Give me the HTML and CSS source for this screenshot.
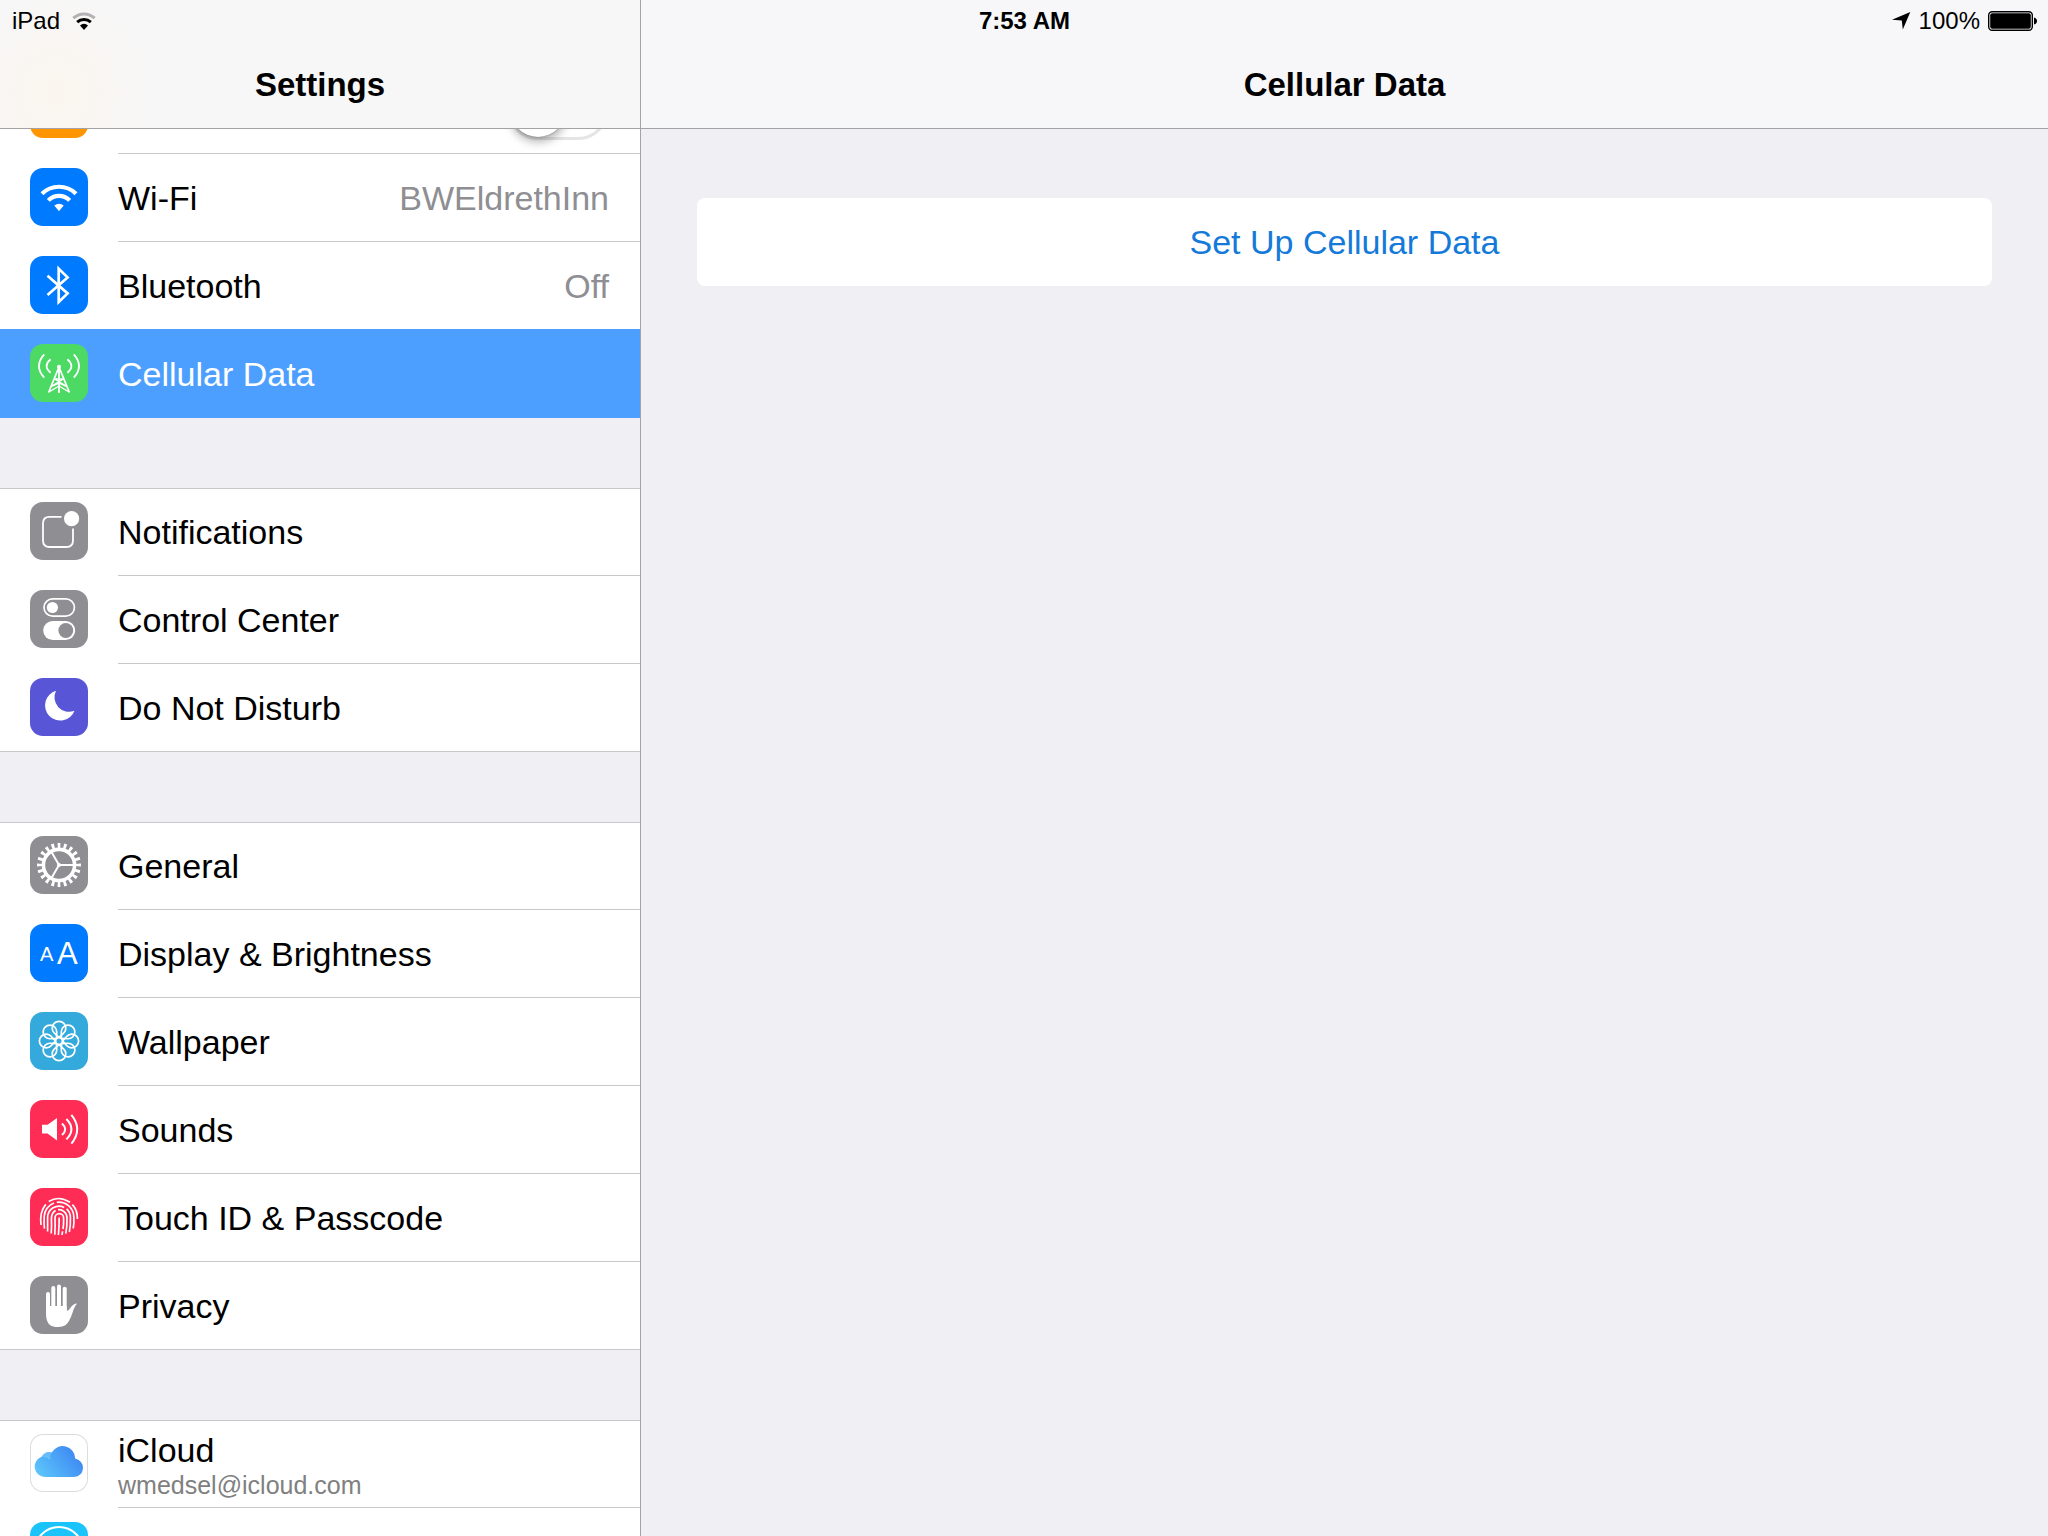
FILE: index.html
```
<!DOCTYPE html>
<html lang="en">
<head>
    <meta charset="UTF-8">
    <title>Settings</title>
    <link rel="stylesheet" href="styles.css">
</head>
<body>
<div class="status">
    <div class="status-left">
        <span>iPad</span>
        <svg class="status-wifi" viewBox="0 0 24 18" width="24" height="18">
            <path d="M1.3 6.2A15.5 15.5 0 0 1 22.7 6.2" fill="none" stroke="#b2b2b4" stroke-width="3"/>
            <path d="M5.2 10.2A10 10 0 0 1 18.8 10.2" fill="none" stroke="#000" stroke-width="3"/>
            <path d="M12 18L8 13.4A6 6 0 0 1 16 13.4Z"/>
        </svg>
    </div>
    <div class="time">7:53 AM</div>
    <div class="status-right">
        <svg viewBox="0 0 19 18" width="19" height="18"><path d="M18.3 0L10.8 17.5L9.8 8.4L0 7.7Z"/></svg>
        <span>100%</span>
        <svg class="battery" viewBox="0 0 49 20" width="49" height="20">
            <rect x="0.7" y="0.7" width="43.6" height="18.6" rx="3.5" fill="#fff" stroke="#000" stroke-width="1.4"/>
            <rect x="2.2" y="2.2" width="40.6" height="15.6" rx="2"/>
            <path d="M46 6.5Q49 7.5 49 10T46 13.5Z"/>
        </svg>
    </div>
</div>
<div class="split">
    <aside class="sidebar">
        <header class="bar bar-list"><h1>Settings</h1></header>
        <nav class="list">
            <ul class="group">
                <li class="row">
                    <span class="icon orange">
                        <svg viewBox="0 0 58 58"><path fill="#fff" d="M48 29q0-3-5-3H34L24 11H20l5 15H16l-4-5H9l3 8-3 8h3l4-5h9L20 47h4L34 32h9q5 0 5-3z"/></svg>
                    </span>
                    <label class="name" for="airplane">Airplane Mode</label>
                    <input class="switch" type="checkbox" id="airplane">
                </li>
                <li>
                    <a class="row" href="#wifi">
                        <span class="icon blue">
                            <svg viewBox="0 0 58 58">
                                <g fill="none" stroke="#fff" stroke-width="4.2">
                                    <path d="M12 25.7A24.3 24.3 0 0 1 46 25.7"/>
                                    <path d="M18.3 32.4A15 15 0 0 1 39.7 32.4"/>
                                </g>
                                <path fill="#fff" d="M29 43.3L24.3 37.6A7.5 7.5 0 0 1 33.7 37.6Z"/>
                            </svg>
                        </span>
                        <span class="name">Wi-Fi</span>
                        <span class="value">BWEldrethInn</span>
                    </a>
                </li>
                <li>
                    <a class="row" href="#bluetooth">
                        <span class="icon blue">
                            <svg viewBox="0 0 58 58"><path fill="none" stroke="#fff" stroke-width="2.7" d="M17.5 19.8L37.6 37.4L28.7 46V12.8L37.6 21.4L17.5 39"/></svg>
                        </span>
                        <span class="name">Bluetooth</span>
                        <span class="value">Off</span>
                    </a>
                </li>
                <li>
                    <a class="row selected" href="#cellular" aria-current="page">
                        <span class="icon green">
                            <svg viewBox="0 0 58 58">
                                <g fill="none" stroke="#fff" stroke-width="1.8">
                                    <path d="M29 22V49M28.6 24L18.6 48.5M29.4 24L39.4 48.5"/>
                                    <path stroke-width="1.4" d="M24.6 35H33.4M24.6 35L37 42.5M33.4 35L21 42.5M21 42.5L29 39L37 42.5M19 48L29 42L39 48"/>
                                    <path d="M20.6 15.3Q12.6 22 20.6 28.8M37.4 15.3Q45.4 22 37.4 28.8"/>
                                    <path d="M14.2 10.3Q3.8 22 14.2 33.7M43.8 10.3Q54.2 22 43.8 33.7"/>
                                </g>
                                <circle cx="29" cy="22.8" r="2" fill="#fff"/>
                            </svg>
                        </span>
                        <span class="name">Cellular Data</span>
                    </a>
                </li>
            </ul>
            <ul class="group">
                <li>
                    <a class="row" href="#notifications">
                        <span class="icon gray">
                            <svg viewBox="0 0 58 58">
                                <path fill="none" stroke="#fff" stroke-width="1.8" d="M31.5 14.8H19.5Q13 14.8 13 21.3V38.3Q13 45 19.5 45H36.5Q43 45 43 38.3V26.5"/>
                                <circle cx="41.6" cy="16.7" r="7.6" fill="#fff"/>
                            </svg>
                        </span>
                        <span class="name">Notifications</span>
                    </a>
                </li>
                <li>
                    <a class="row" href="#control-center">
                        <span class="icon gray">
                            <svg viewBox="0 0 58 58">
                                <rect x="14" y="8.8" width="30.4" height="17.4" rx="8.7" fill="none" stroke="#fff" stroke-width="1.7"/>
                                <circle cx="22.4" cy="17.5" r="5.6" fill="#fff"/>
                                <rect x="13.2" y="31" width="32" height="19" rx="9.5" fill="#fff"/>
                                <circle cx="35.8" cy="40.5" r="7.4" fill="#8e8e93"/>
                            </svg>
                        </span>
                        <span class="name">Control Center</span>
                    </a>
                </li>
                <li>
                    <a class="row" href="#dnd">
                        <span class="icon purple">
                            <svg viewBox="0 0 58 58"><path fill="#fff" d="M26 12.8A15.2 15.2 0 1 0 44.5 32.7A14.5 14.5 0 0 1 26 12.8Z"/></svg>
                        </span>
                        <span class="name">Do Not Disturb</span>
                    </a>
                </li>
            </ul>
            <ul class="group">
                <li>
                    <a class="row" href="#general">
                        <span class="icon gray">
                            <svg viewBox="0 0 58 58">
                                <g fill="none" stroke="#fff">
                                    <circle cx="29" cy="29" r="15.6" stroke-width="3.6"/>
                                    <!-- teeth -->
                                    <circle cx="29" cy="29" r="19.2" stroke-width="5.6" pathLength="40" stroke-dasharray="0.9 1.1" stroke-dashoffset="0.45"/>
                                    <path stroke-width="2" d="M29 29H44M29 29L21.5 16M29 29L21.5 42"/>
                                </g>
                                <circle cx="29" cy="29" r="2" fill="#fff"/>
                            </svg>
                        </span>
                        <span class="name">General</span>
                    </a>
                </li>
                <li>
                    <a class="row" href="#display">
                        <span class="icon blue">
                            <svg viewBox="0 0 58 58" aria-hidden="true">
                                <text class="glyph-small" x="10" y="37">A</text>
                                <text class="glyph-big" x="27" y="40">A</text>
                            </svg>
                        </span>
                        <span class="name">Display &amp; Brightness</span>
                    </a>
                </li>
                <li>
                    <a class="row" href="#wallpaper">
                        <span class="icon sky">
                            <svg viewBox="0 0 58 58">
                                <defs><path id="petal" d="M29 25.4L24.4 21.2A6.8 6.8 0 1 1 33.6 21.2Z"/></defs>
                                <g fill="none" stroke="#fff" stroke-width="1.7">
                                    <use href="#petal"/>
                                    <use href="#petal" transform="rotate(45 29 29)"/>
                                    <use href="#petal" transform="rotate(90 29 29)"/>
                                    <use href="#petal" transform="rotate(135 29 29)"/>
                                    <use href="#petal" transform="rotate(180 29 29)"/>
                                    <use href="#petal" transform="rotate(225 29 29)"/>
                                    <use href="#petal" transform="rotate(270 29 29)"/>
                                    <use href="#petal" transform="rotate(315 29 29)"/>
                                    <circle cx="29" cy="29" r="3.4"/>
                                </g>
                            </svg>
                        </span>
                        <span class="name">Wallpaper</span>
                    </a>
                </li>
                <li>
                    <a class="row" href="#sounds">
                        <span class="icon pink">
                            <svg viewBox="0 0 58 58">
                                <path fill="#fff" d="M12 24.8H17.6L27 18V40.4L17.6 33.6H12Z"/>
                                <g fill="none" stroke="#fff" stroke-width="2">
                                    <path d="M32 23.4Q38.4 29.2 32 35"/>
                                    <path d="M36.4 19Q46.4 29.2 36.4 39.4"/>
                                    <path d="M41.4 14.8Q53 29.2 41.4 43.6"/>
                                </g>
                            </svg>
                        </span>
                        <span class="name">Sounds</span>
                    </a>
                </li>
                <li>
                    <a class="row" href="#touch-id">
                        <span class="icon pink">
                            <svg viewBox="0 0 58 58">
                                <g fill="none" stroke="#fff" stroke-width="1.7">
                                    <path d="M18.8 13.4Q29 7.2 40 14.2"/>
                                    <path d="M15.8 16.4Q9.4 24 11 37"/>
                                    <path d="M42.4 16.6Q47.6 22 47.4 31"/>
                                    <path d="M14.4 40.6Q13.8 35 14.2 28.5A14.7 14.7 0 0 1 24 15"/>
                                    <path d="M26.8 14.3A14.8 14.8 0 0 1 43.8 28.5Q44.4 35 43.2 40.5"/>
                                    <path d="M17.6 43.6V29.5A11.4 11.4 0 0 1 34.2 19.4"/>
                                    <path d="M36.6 20.8A11.3 11.3 0 0 1 40.4 29.4Q40.6 38 39.4 43.8"/>
                                    <path d="M21.2 45.5Q21.8 38 21.4 31Q21.4 25 25.6 22.6"/>
                                    <path d="M28 21.6A8.2 8.2 0 0 1 37 30Q37.2 38 35.8 45.6"/>
                                    <path d="M24.8 46.8Q25.4 38 25 30A4.3 4.3 0 0 1 33.6 30Q33.8 36 33 41"/>
                                    <path d="M32.6 43.4L32 46.8M28.4 47Q29.2 38 29.2 29.4"/>
                                </g>
                            </svg>
                        </span>
                        <span class="name">Touch ID &amp; Passcode</span>
                    </a>
                </li>
                <li>
                    <a class="row" href="#privacy">
                        <span class="icon gray">
                            <svg viewBox="0 0 58 58">
                                <path fill="none" stroke="#fff" stroke-width="4" stroke-linecap="round" d="M18 18V34M23.3 12V34M29 10.4V34M34.7 12.8V34"/>
                                <path fill="#fff" d="M16 30H36.7V35Q38.4 34.8 40 32.4Q43 27.6 47.3 27.6Q44.4 30.4 42.6 36.6Q39.4 46.4 35.4 49.2Q32.6 51 28.4 51Q22.4 51 19.4 48.4Q16 45.2 16 38Z"/>
                            </svg>
                        </span>
                        <span class="name">Privacy</span>
                    </a>
                </li>
            </ul>
            <ul class="group">
                <li>
                    <a class="row" href="#icloud">
                        <span class="icon white">
                            <svg viewBox="0 0 58 58">
                                <defs>
                                    <linearGradient id="cloud" x1="0" y1="0.8" x2="1" y2="0.3">
                                        <stop offset="0" stop-color="#5cc6fa"/>
                                        <stop offset="1" stop-color="#3c84f2"/>
                                    </linearGradient>
                                </defs>
                                <path fill="url(#cloud)" d="M15 43A10.4 10.4 0 0 1 11.6 22.8A7.8 7.8 0 0 1 21.6 18.6A12.6 12.6 0 0 1 45.2 24.4Q53 26.8 53 34Q52.4 42.4 44 43Z"/>
                                <path fill="#7fd2fb" opacity="0.5" d="M11.6 22.8A7.8 7.8 0 0 1 21.6 18.6Q20 22 20.2 26Q16 22.4 11.6 22.8Z"/>
                            </svg>
                        </span>
                        <span class="name account">iCloud<small>wmedsel@icloud.com</small></span>
                    </a>
                </li>
                <li>
                    <a class="row" href="#store">
                        <span class="icon cyan">
                            <svg viewBox="0 0 58 58">
                                <g fill="none" stroke="#fff" stroke-width="2">
                                    <circle cx="29" cy="29" r="24"/>
                                    <path d="M19 43L32 17M39 43L26 17M14 37H44"/>
                                </g>
                            </svg>
                        </span>
                    </a>
                </li>
            </ul>
        </nav>
    </aside>
    <main class="detail">
        <header class="bar"><h2>Cellular Data</h2></header>
        <div class="content">
            <button class="setup" type="button">Set Up Cellular Data</button>
        </div>
    </main>
</div>
</body>
</html>
```
FILE: styles.css
```
*{
    margin: 0;
    padding: 0;
    box-sizing: border-box;
}
body{
    height: 100vh;
    overflow: hidden;
    position: relative;
    background: #efeff4;
    color: #000;
    font-family: "Liberation Sans", Arial, sans-serif;
    font-size: 34px;
}
ul{
    list-style: none;
}
a{
    color: inherit;
    text-decoration: none;
}

/* status bar, floats over both columns */
.status{
    position: absolute;
    top: 0;
    left: 0;
    right: 0;
    z-index: 2;
    height: 41px;
    padding: 0 11px 0 12px;
    display: grid;
    grid-template-columns: 1fr auto 1fr;
    align-items: center;
    font-size: 24px;
}
.status-left,
.status-right{
    display: flex;
    align-items: center;
    gap: 12px;
}
.status-right{
    justify-content: flex-end;
    gap: 8px;
}
.time{
    font-weight: bold;
}

.split{
    display: flex;
    height: 100%;
}
.sidebar{
    flex: 0 0 641px;
    display: flex;
    flex-direction: column;
    border-right: 1px solid #a3a3a7;
}
.detail{
    flex: 1;
}
.bar{
    position: relative;
    z-index: 1;
    flex: none;
    height: 129px;
    padding-top: 42px;
    display: flex;
    align-items: center;
    justify-content: center;
    background: #f7f7f9;
    border-bottom: 1px solid #a3a3a7;
}
.bar-list{
    background: radial-gradient(circle at 56px 92px, #faf5ee, #f7f7f8 110px);
}
.bar h1,
.bar h2{
    font-size: 33px;
    font-weight: bold;
}

/* the list is scrolled part of the way under the title bar */
.list{
    flex: 1;
    min-height: 0;
    margin-top: -63px;
    overflow: hidden;
    display: flex;
    flex-direction: column;
    gap: 70px;
}
.group{
    flex: none;
    background: #fff;
    box-shadow: inset 0 1px #c8c7cc, inset 0 -1px #c8c7cc;
}
.row{
    height: 88px;
    padding: 0 31px 0 30px;
    display: flex;
    align-items: center;
    gap: 30px;
    /* separator starts at the label */
    background: linear-gradient(#c8c7cc, #c8c7cc) 118px 100% / 100% 1px no-repeat;
}
.row.selected{
    background: #4d9fff;
    box-shadow: 0 -1px #4d9fff;
    color: #fff;
}
.name{
    flex: 1;
    white-space: nowrap;
}
.value{
    color: #8e8e93;
}
.account{
    padding-top: 4px;
    line-height: 38px;
}
.account small{
    display: block;
    color: #808080;
    font-size: 25px;
    line-height: 32px;
}

.icon{
    flex: none;
    width: 58px;
    height: 58px;
    margin-bottom: 2px;
    border-radius: 13px;
    overflow: hidden;
}
.icon svg{
    display: block;
    width: 58px;
    height: 58px;
}
.orange{ background: #ff9500; }
.blue{ background: #007aff; }
.green{ background: #4cd964; }
.gray{ background: #8e8e93; }
.purple{ background: #5856d6; }
.sky{ background: #34aadc; }
.pink{ background: #ff2d55; }
.cyan{ background: #1ac4fb; }
.white{
    background: #fff;
    box-shadow: inset 0 0 0 1px #dcdcde;
}
.glyph-small,
.glyph-big{
    fill: #fff;
    font-size: 20px;
}
.glyph-big{
    font-size: 31px;
}

.switch{
    appearance: none;
    flex: none;
    width: 102px;
    height: 62px;
    margin-bottom: 2px;
    border: 3px solid #e5e5e5;
    border-radius: 31px;
    background: #fff;
}
.switch::before{
    content: "";
    display: block;
    width: 56px;
    height: 56px;
    border-radius: 50%;
    background: #fff;
    box-shadow: 0 0 2px rgba(0,0,0,.4), 0 5px 10px rgba(0,0,0,.3);
}
.switch:checked{
    border-color: #4cd964;
    background: #4cd964;
}
.switch:checked::before{
    margin-left: 40px;
}

.content{
    padding: 69px 56px;
}
.setup{
    display: block;
    width: 100%;
    height: 88px;
    border: 0;
    border-radius: 8px;
    background: #fff;
    color: #147ad9;
    font: inherit;
}
```
